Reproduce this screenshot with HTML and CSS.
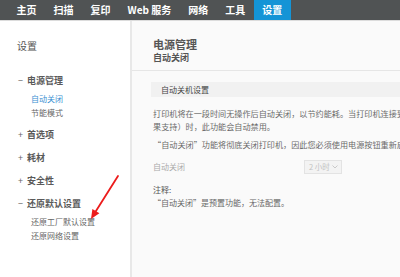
FILE: index.html
```html
<!DOCTYPE html>
<html lang="zh">
<head>
<meta charset="utf-8">
<link rel="stylesheet" href="styles.css">
</head>
<body>
<nav class="topnav">
  <a class="tab">主页</a>
  <a class="tab">扫描</a>
  <a class="tab">复印</a>
  <a class="tab">Web 服务</a>
  <a class="tab">网络</a>
  <a class="tab">工具</a>
  <a class="tab active">设置</a>
</nav>
<div class="main">
  <aside class="sidebar">
    <div class="side-title">设置</div>
    <ul class="menu">
      <li class="group"><span class="sign">−</span>电源管理</li>
      <li class="sub active">自动关闭</li>
      <li class="sub last">节能模式</li>
      <li class="group"><span class="sign">+</span>首选项</li>
      <li class="group"><span class="sign">+</span>耗材</li>
      <li class="group"><span class="sign">+</span>安全性</li>
      <li class="group"><span class="sign">−</span>还原默认设置</li>
      <li class="sub">还原工厂默认设置</li>
      <li class="sub">还原网络设置</li>
    </ul>
  </aside>
  <section class="content">
    <header class="page-head">
      <h1 class="h-main">电源管理</h1>
      <h2 class="h-sub">自动关闭</h2>
    </header>
    <div class="body">
      <div class="sect">自动关机设置</div>
      <p class="para p1">打印机将在一段时间无操作后自动关闭，以节约能耗。当打印机连接到网络（如果支持）时，此功能会自动禁用。</p>
      <p class="para p2">“自动关闭”功能将彻底关闭打印机，因此您必须使用电源按钮重新启动打印机。</p>
      <div class="field">
        <span class="label">自动关闭</span>
        <span class="select">2 小时<svg class="chev" width="6" height="4" viewBox="0 0 6 4"><path d="M0.5 0.5 L3 3 L5.5 0.5" fill="none" stroke="#c4c4c4" stroke-width="0.9"/></svg></span>
      </div>
      <div class="note-title">注释:</div>
      <div class="note">“自动关闭”是预置功能，无法配置。</div>
    </div>
  </section>
</div>
<svg class="arrow" width="40" height="55" viewBox="85 170 40 55">
  <line x1="118" y1="176" x2="95.5" y2="211.8" stroke="#ec1c1c" stroke-width="1.8" stroke-linecap="round"/>
  <polygon points="91,219 99.4,213.3 92.4,209" fill="#ec1c1c"/>
</svg>
</body>
</html>
```
FILE: styles.css
```css
html, body {
  margin: 0;
  padding: 0;
  overflow: hidden;
  width: 400px;
  height: 277px;
}
body {
  font-family: "Noto Sans CJK SC", "Noto Sans", sans-serif;
  background: #fafafa;
  position: relative;
}
.topnav {
  display: flex;
  height: 20px;
  background: #505354;
  padding-left: 8px;
  border-bottom: 1px solid #dcdcdc;
}
.tab {
  display: block;
  padding: 0 8.5px;
  color: #fff;
  font-weight: 700;
  font-size: 10px;
  line-height: 20px;
  white-space: nowrap;
}
.tab.active {
  background: #1494d6;
}
.main {
  display: flex;
  height: 256px;
}
.sidebar {
  flex: none;
  width: 130px;
  background: #fff;
  padding-left: 17px;
  box-sizing: border-box;
}
.side-title {
  margin-top: 18px;
  font-size: 10px;
  line-height: 14px;
  color: #555;
  margin-bottom: 15.5px;
}
.menu {
  list-style: none;
  margin: 0;
  padding: 0;
}
.group {
  height: 23px;
  line-height: 23px;
  font-size: 9px;
  font-weight: 700;
  color: #5a5a5a;
}
.sign {
  display: inline-block;
  width: 9px;
  padding-left: 1px;
  font-weight: 400;
  color: #666;
}
.sub {
  padding-left: 14px;
  font-size: 8px;
  line-height: 14px;
  color: #666;
}
.sub.active {
  color: #3a90d2;
}
.sub.last {
  margin-bottom: 3px;
}
.content {
  flex: none;
  width: 420px;
  border-left: 2px solid #e8e8e8;
  background: #fafafa;
}
.page-head {
  padding: 15.5px 21px 6px;
  border-bottom: 1px solid #e6e6e6;
}
.h-main {
  margin: 0;
  font-size: 11px;
  line-height: 15px;
  font-weight: 700;
  color: #555;
}
.h-sub {
  margin: 0;
  font-size: 9px;
  line-height: 12px;
  font-weight: 700;
  color: #555;
}
.body {
  padding: 11px 0 0 19px;
}
.sect {
  height: 15px;
  line-height: 15px;
  padding-left: 10px;
  background: #f1f1f1;
  font-size: 8px;
  color: #444;
}
.para {
  margin: 0;
  padding-left: 2px;
  width: 290px;
  font-size: 8.15px;
  line-height: 13px;
  color: #6a6a6a;
}
.p1 {
  margin-top: 10px;
}
.p2 {
  margin-top: 5px;
  white-space: nowrap;
}
.field {
  display: flex;
  align-items: center;
  padding-left: 2px;
  margin-top: 9px;
  height: 14px;
}
.label {
  width: 151px;
  font-size: 8px;
  color: #aaa;
}
.select {
  display: flex;
  align-items: center;
  gap: 2px;
  height: 12px;
  padding: 0 3px 0 4px;
  border: 1px solid #e3e3e3;
  background: #f3f3f3;
  font-size: 7.5px;
  color: #c2c2c2;
}
.note-title {
  margin-top: 9px;
  padding-left: 2px;
  font-size: 8px;
  line-height: 13px;
  color: #555;
}
.note {
  padding-left: 2px;
  font-size: 8px;
  line-height: 13px;
  color: #666;
}
.arrow {
  position: absolute;
  left: 85px;
  top: 170px;
}
```
